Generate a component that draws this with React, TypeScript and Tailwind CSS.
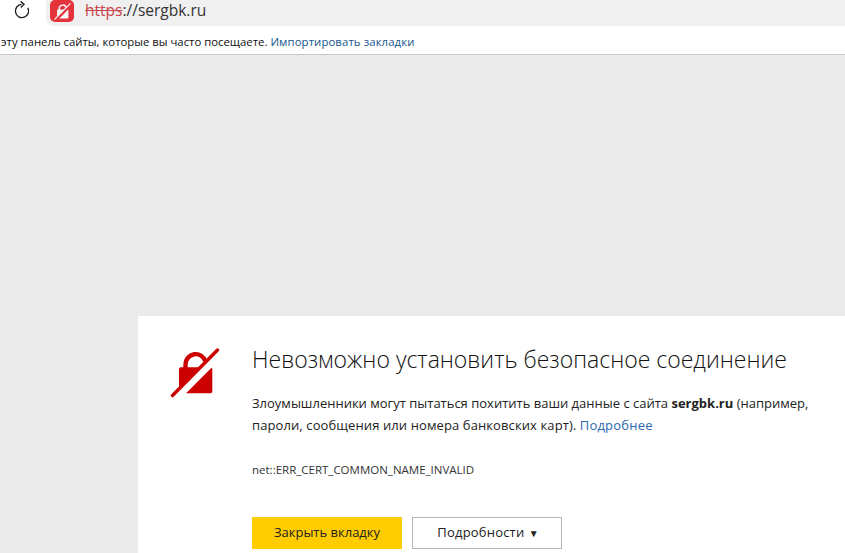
const LockOff = ({ size, bg, fg }: { size: number; bg: string; fg: string }) => (
    <svg width={size} height={size} viewBox="0 0 50 50">
        <path d="M15.5 21V16.5a10.2 10.2 0 0 1 20-3" fill="none" stroke={fg} strokeWidth="4.4" />
        <path d="M9 21.3a2 2 0 0 1 2-2h29.3a2 2 0 0 1 2 2v22a2 2 0 0 1-2 2H11a2 2 0 0 1-2-2z" fill={fg} />
        <path d="M3 53L53 3" stroke={bg} strokeWidth="7.5" fill="none" />
        <path d="M2.5 47.5L47.5 2" stroke={fg} strokeWidth="3.4" fill="none" strokeLinecap="round" />
    </svg>
)

const Reload = () => (
    <svg width="20" height="20" viewBox="0 0 20 20" fill="none" stroke="#222" strokeWidth="1.4">
        <path d="M15.8 6.8A6.6 6.6 0 1 1 9.6 3.4" />
        <path d="M8.6 0.4L12 3.4L8.8 6.6" />
    </svg>
)

export default function App() {
    return (
        <div className="h-[553px] w-[845px] overflow-hidden flex flex-col bg-[#ebebeb] font-['Open_Sans','Noto_Sans',sans-serif] text-[#111]">
            <div className="flex h-[26px] bg-white shrink-0">
                <div className="w-[46px] flex justify-center items-start pr-[3px] pt-[1px]">
                    <Reload />
                </div>
                <div className="flex-1 flex bg-[#f0f0f0] rounded-bl-[8px] pb-[1px] pl-[4px]">
                    <div className="w-[24px] h-[22px] rounded-[5px] bg-[#e5333c] flex items-center justify-center">
                        <LockOff size={17} bg="#e5333c" fg="#f7f7f7" />
                    </div>
                    <div className="ml-[11px] text-[15.5px] text-[#333] leading-[21px]">
                        <span className="text-[#c9454b] line-through">https</span>://sergbk.ru
                    </div>
                </div>
            </div>
            <div className="h-[29px] shrink-0 bg-white border-b border-[#c8c8c8] pl-[1px] pt-[3px] flex items-center text-[11.35px] whitespace-nowrap">
                <span>эту панель сайты, которые вы часто посещаете.</span>
                <span className="ml-[3px] text-[#14558f] tracking-[0.1px]">Импортировать закладки</span>
            </div>
            <div className="flex-1 pt-[261px] pl-[138px]">
                <div className="h-full bg-white flex pl-[32px] pt-[28px]">
                    <div className="w-[82px] shrink-0 pt-[4px]">
                        <LockOff size={50} bg="#ffffff" fg="#cc0000" />
                    </div>
                    <div className="flex-1">
                        <h1 className="text-[23px] leading-[30px] font-light text-[#111] whitespace-nowrap">
                            Невозможно установить безопасное соединение
                        </h1>
                        <p className="mt-[18px] text-[13px] leading-[22px] text-[#222] whitespace-nowrap">
                            Злоумышленники могут пытаться похитить ваши данные с сайта <b className="font-bold">sergbk.ru</b> (например,
                            <br />
                            <span className="tracking-[0.1px]">пароли, сообщения или номера банковских карт).</span>{' '}
                            <span className="text-[#2d66b0] tracking-[0.2px]">Подробнее</span>
                        </p>
                        <div className="mt-[26px] text-[11.5px] leading-[16px] text-[#333]">net::ERR_CERT_COMMON_NAME_INVALID</div>
                        <div className="mt-[39px] flex gap-[10px]">
                            <button className="w-[150px] h-[32px] bg-[#ffcc00] text-[13px] text-[#222]">Закрыть вкладку</button>
                            <button className="w-[150px] h-[32px] pl-[2px] bg-white border border-[#b5b5b5] text-[13px] text-[#222]">
                                <span className="tracking-[0.2px]">Подробности</span> <span className="ml-[1px] text-[10px]">▼</span>
                            </button>
                        </div>
                    </div>
                </div>
            </div>
        </div>
    )
}
